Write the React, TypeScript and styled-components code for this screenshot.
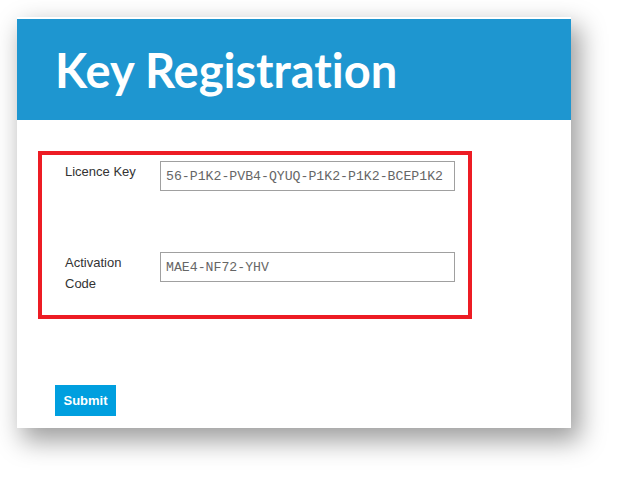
import React from "react";
import styled, { createGlobalStyle } from "styled-components";

const Global = createGlobalStyle`
  html, body { margin: 0; padding: 0; background: #ffffff; }
  body { font-family: "Liberation Sans", Arial, sans-serif; }
`;

const Page = styled.div`
  padding: 17px 0 0 17px;
  height: 460px;
`;

const Card = styled.div`
  width: 554px;
  height: 409px;
  padding-top: 2px;
  background: #ffffff;
  box-shadow: 7px 11px 24px 2px rgba(0, 0, 0, 0.38);
  display: flex;
  flex-direction: column;
`;

const Header = styled.header`
  height: 101px;
  background: #1e96d0;
  display: flex;
  align-items: center;
  padding-left: 38px;
  box-sizing: border-box;
`;

const Title = styled.h1`
  margin: 0;
  font-family: Lato, "Open Sans", sans-serif;
  font-weight: 700;
  font-size: 47px;
  color: #ffffff;
  font-variant-ligatures: none;
  font-feature-settings: "liga" 0, "clig" 0;
`;

const Body = styled.div`
  padding: 31px 0 0 21px;
  display: flex;
  flex-direction: column;
  flex: 1;
`;

const Highlight = styled.div`
  width: 434px;
  height: 168px;
  box-sizing: border-box;
  border: 4px solid #ed1c24;
  padding: 6px 0 0 23px;
  display: flex;
  flex-direction: column;
  gap: 61px;
`;

const Row = styled.div`
  display: grid;
  grid-template-columns: 95px 295px;
  align-items: start;
`;

const Label = styled.label`
  font-family: "Liberation Sans", Arial, sans-serif;
  font-size: 13px;
  line-height: 21px;
  color: #333333;
  width: 80px;
`;

const Field = styled.input`
  box-sizing: border-box;
  width: 295px;
  height: 30px;
  margin: 0;
  border: 1px solid #a0a0a0;
  padding: 0 5px;
  font-family: "Liberation Mono", "Courier New", monospace;
  font-size: 13.2px;
  color: #666666;
  background: #ffffff;
  outline: none;
`;

const Submit = styled.button`
  margin: 66px 0 0 17px;
  align-self: flex-start;
  height: 31px;
  width: 61px;
  padding: 0;
  border: none;
  background: #009fdf;
  color: #ffffff;
  font-family: "Liberation Sans", Arial, sans-serif;
  font-weight: 700;
  font-size: 13px;
  cursor: pointer;
`;

export default function App() {
  return (
    <>
      <Global />
      <Page>
        <Card>
          <Header>
            <Title>Key Registration</Title>
          </Header>
          <Body>
            <Highlight>
              <Row>
                <Label>Licence Key</Label>
                <Field readOnly value="56-P1K2-PVB4-QYUQ-P1K2-P1K2-BCEP1K2" />
              </Row>
              <Row>
                <Label>Activation Code</Label>
                <Field readOnly value="MAE4-NF72-YHV" />
              </Row>
            </Highlight>
            <Submit>Submit</Submit>
          </Body>
        </Card>
      </Page>
    </>
  );
}
